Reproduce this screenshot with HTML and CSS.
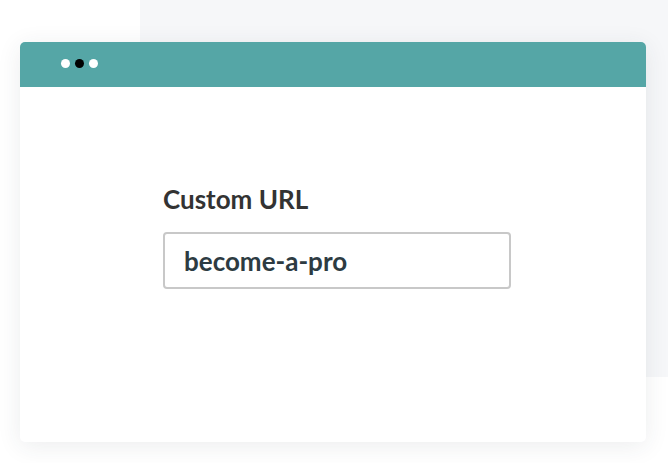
FILE: index.html
```html
<!DOCTYPE html>
<html lang="en">
<head>
  <meta charset="UTF-8">
  <meta name="viewport" content="width=device-width,initial-scale=1.0">
  <title>Custom URL</title>
  <link rel="stylesheet" href="styles.css">
</head>
<body>
  <div class="window">
    <div class="window-bar">
      <span class="dot"></span>
      <span class="dot dark"></span>
      <span class="dot"></span>
    </div>
    <div class="window-body">
      <label class="field-label" for="custom-url">Custom URL</label>
      <input class="field-input" id="custom-url" type="text" value="become-a-pro">
    </div>
  </div>
</body>
</html>
```
FILE: styles.css
```css
body {
  margin: 0;
  padding: 42px 22px 21px 20px;
  font-family: Lato, "Open Sans", sans-serif;
  color: #333;
  background: #fff linear-gradient(#f6f7f9, #f6f7f9) no-repeat 140px 0 / 528px 377px;
}
.window {
  width: 626px;
  height: 400px;
  background: #fff;
  border-radius: 5px;
  overflow: hidden;
  box-shadow: 0 4px 24px rgba(40, 50, 70, 0.09);
  display: flex;
  flex-direction: column;
}
.window-bar {
  height: 45px;
  flex-shrink: 0;
  background: #55a6a6;
  display: flex;
  align-items: center;
  gap: 5px;
  padding-left: 41px;
  padding-bottom: 2px;
  box-sizing: border-box;
}
.dot {
  width: 9px;
  height: 9px;
  border-radius: 50%;
  background: #fff;
}
.dot.dark {
  background: #000;
}
.window-body {
  display: flex;
  flex-direction: column;
  align-items: flex-start;
  padding: 97px 0 0 143px;
}
.field-label {
  font-size: 26px;
  line-height: 31px;
  font-weight: 700;
  color: #333;
  margin-bottom: 17px;
}
.field-input {
  width: 348px;
  height: 57px;
  box-sizing: border-box;
  border: 2px solid #c8c8c8;
  border-radius: 4px;
  padding: 0 19px;
  font-family: Lato, "Open Sans", sans-serif;
  font-size: 26px;
  font-weight: 700;
  color: #2d3b42;
  outline: none;
}
```
